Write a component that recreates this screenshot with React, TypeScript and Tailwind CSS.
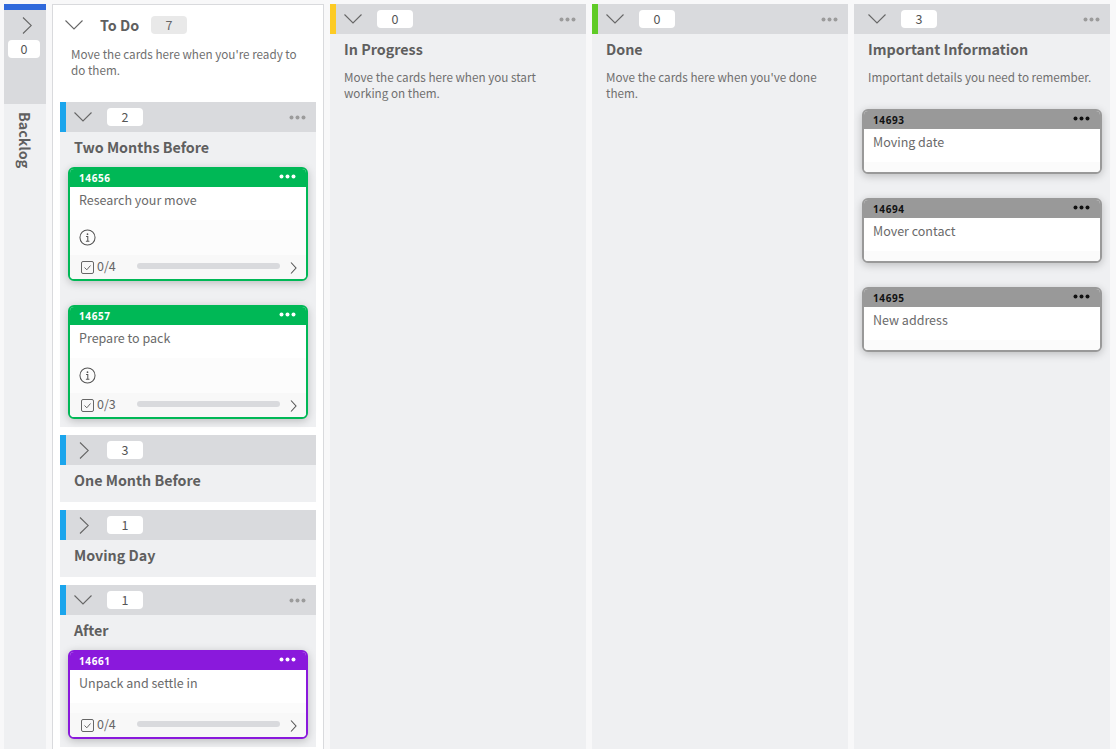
import { FC, ReactNode } from 'react'

const font = { fontFamily: '"Noto Sans CJK JP", "Noto Sans", sans-serif' }

const Chevron: FC<{ open?: boolean; className?: string }> = ({ open, className = '' }) =>
  open ? (
    <svg width="18" height="10" viewBox="0 0 18 10" className={className} fill="none" stroke="#666" strokeWidth="1.1">
      <path d="M0.5 0.5 L9 9 L17.5 0.5" />
    </svg>
  ) : (
    <svg width="10" height="17" viewBox="0 0 10 17" className={className} fill="none" stroke="#666" strokeWidth="1.1">
      <path d="M1 0.5 L9.3 8.5 L1 16.5" />
    </svg>
  )

const Dots: FC<{ color: string }> = ({ color }) => (
  <svg width="17" height="5" viewBox="0 0 17 5" fill={color}>
    <circle cx="2.5" cy="2.5" r="2" />
    <circle cx="8.5" cy="2.5" r="2" />
    <circle cx="14.5" cy="2.5" r="2" />
  </svg>
)

const Count: FC<{ n: number }> = ({ n }) => (
  <div className="w-9 h-[18px] rounded bg-white flex items-center justify-center text-[12.5px] leading-[18px] text-[#555]">{n}</div>
)

const LaneBar: FC<{ stripe: string; n: number; open?: boolean }> = ({ stripe, n, open }) => (
  <div className="h-[30px] bg-[#d9dadd] flex items-center">
    <div className={`w-1.5 h-full ${stripe}`} />
    <div className={`w-[41px] shrink-0 flex ${open ? 'pl-2' : 'pl-[13px]'}`}>
      <Chevron open={open} />
    </div>
    <Count n={n} />
    {open && (
      <div className="ml-auto mr-[10px] flex">
        <Dots color="#9b9b9b" />
      </div>
    )}
  </div>
)

const Progress: FC<{ label: string }> = ({ label }) => (
  <div className="h-6 bg-[#f8f8f8] flex items-center pl-[11px] rounded-b-[3px]">
    <svg width="13" height="13" viewBox="0 0 13 13" fill="none" stroke="#666" strokeWidth="1" className="shrink-0">
      <rect x="0.5" y="0.5" width="12" height="12" rx="1.5" />
      <path d="M3.5 6.5 L5.8 8.8 L9.5 4.5" />
    </svg>
    <span className="ml-[3px] w-[40px] -mt-[2px] text-[12.5px] leading-4 text-[#666]">{label}</span>
    <div className="w-[143px] h-1.5 -mt-[2px] rounded-full bg-[#d9dadd]" />
    <svg width="7" height="12" viewBox="0 0 7 12" fill="none" stroke="#555" strokeWidth="1.1" className="ml-[10px] mt-[2px]">
      <path d="M1 0.5 L6 6 L1 11.5" />
    </svg>
  </div>
)

const Card: FC<{
  id: number
  title: string
  border: string
  head: string
  idTone?: string
  dots?: string
  info?: boolean
  progress?: string
}> = ({ id, title, border, head, idTone = 'text-white', dots = '#ffffff', info, progress }) => (
  <div className={`rounded-[6px] border-2 bg-white shadow-[0_2px_8px_rgba(0,0,0,0.22)] overflow-hidden ${border}`}>
    <div className={`h-[18px] flex items-center justify-between pl-[9px] pr-[10px] ${head}`}>
      <span className={`text-[10px] font-bold tracking-[0.6px] leading-[18px] ${idTone}`} style={{ fontFamily: '"Noto Sans", sans-serif' }}>
        {id}
      </span>
      <div className="-mt-[3px] flex">
        <Dots color={dots} />
      </div>
    </div>
    <div className="h-[33px] pl-[9px] pt-1 text-[12.5px] leading-[18px] text-[#6a6a6a]">{title}</div>
    {info ? (
      <div className="h-[35px] bg-[#fcfcfc] pl-[9px] pt-[9px]">
        <svg width="17" height="17" viewBox="0 0 18 18" fill="none" stroke="#555" strokeWidth="1.1">
          <circle cx="9" cy="9" r="8" />
          <circle cx="9" cy="5.5" r="0.9" fill="#555" stroke="none" />
          <path d="M7.5 8 H9.3 V13 M7.3 13 H11" />
        </svg>
      </div>
    ) : (
      <div className="h-[10px] bg-[#fbfbfb]" />
    )}
    {progress && <Progress label={progress} />}
  </div>
)

const Title: FC<{ children: ReactNode }> = ({ children }) => (
  <div className="text-[14.3px] font-bold leading-5 text-[#5f5f5f]">{children}</div>
)

const Desc: FC<{ children: ReactNode; className?: string }> = ({ children, className = '' }) => (
  <p className={`text-[11.7px] leading-4 text-[#6f6f6f] ${className}`}>{children}</p>
)

const Column: FC<{ stripe: string; n: number; title: string; children?: ReactNode }> = ({ stripe, n, title, children }) => (
  <div className="w-64 shrink-0 bg-[#eff0f2] h-[745px]">
    <LaneBar stripe={stripe} n={n} open />
    <div className="pl-[14px] pt-[5px] pr-2">
      <Title>{title}</Title>
    </div>
    {children}
  </div>
)

const Lane: FC<{ stripe: string; n: number; title: string; open?: boolean; className?: string; children?: ReactNode }> = ({
  n,
  stripe,
  title,
  open,
  className = '',
  children,
}) => (
  <div className={`bg-[#eff0f2] ${className}`}>
    <LaneBar stripe={stripe} n={n} open={open} />
    <div className={`pl-[14px] pt-[5px] ${open ? 'pb-[10px]' : 'pb-3'}`}>
      <Title>{title}</Title>
    </div>
    {open && <div className="px-2 flex flex-col gap-6">{children}</div>}
  </div>
)

const App: FC = () => {
  const green = { border: 'border-[#00b856]', head: 'bg-[#00b856]' }
  const purple = { border: 'border-[#8a19dc]', head: 'bg-[#8a19dc]' }
  const gray = { border: 'border-[#999999]', head: 'bg-[#999999]', idTone: 'text-[#111]', dots: '#111111' }

  return (
    <div className="w-[1116px] h-[749px] overflow-hidden bg-[#f8f8f9] pt-1 pl-1 flex gap-1.5" style={font}>
      <div className="w-[42px] shrink-0 h-[745px] bg-[#eff0f2]">
        <div className="h-[100px] bg-[#d9dadd] border-t-[6px] border-[#2f69db] flex flex-col items-center">
          <Chevron className="mt-[7px] ml-[4px]" />
          <div className="mt-[6px] mr-[2px] w-8 h-[18px] rounded bg-white flex items-center justify-center text-[12.5px] leading-[18px] text-[#555]">0</div>
        </div>
        <div className="flex justify-center pt-2">
          <span className="text-[14.3px] font-bold leading-5 text-[#5f5f5f] [writing-mode:vertical-rl]">Backlog</span>
        </div>
      </div>

      <div className="w-[272px] shrink-0 h-[760px] bg-white border border-[#d9dadd] px-[7px]">
        <div className="flex items-center h-[38px] pt-[2px]">
          <Chevron open className="ml-[5px]" />
          <span className="ml-[17px] w-[38px] whitespace-nowrap text-[14.3px] font-bold leading-5 text-[#5f5f5f]">To Do</span>
          <div className="ml-[13px] w-9 h-[18px] rounded bg-[#e9e9e9] flex items-center justify-center text-[12.5px] leading-[18px] text-[#666]">7</div>
        </div>
        <Desc className="ml-[11px] mt-[3px] w-[240px]">Move the cards here when you're ready to do them.</Desc>
        <div className="mt-6 flex flex-col gap-2">
          <Lane stripe="bg-[#1ba5ec]" n={2} title="Two Months Before" open className="pb-2">
            <Card id={14656} title="Research your move" {...green} info progress="0/4" />
            <Card id={14657} title="Prepare to pack" {...green} info progress="0/3" />
          </Lane>
          <Lane stripe="bg-[#1ba5ec]" n={3} title="One Month Before" />
          <Lane stripe="bg-[#1ba5ec]" n={1} title="Moving Day" />
          <Lane stripe="bg-[#1ba5ec]" n={1} title="After" open className="pb-2">
            <Card id={14661} title="Unpack and settle in" {...purple} progress="0/4" />
          </Lane>
        </div>
      </div>

      <Column stripe="bg-[#fdcb24]" n={0} title="In Progress">
        <Desc className="pl-[14px] pt-[10px] w-[230px]">Move the cards here when you start working on them.</Desc>
      </Column>
      <Column stripe="bg-[#5fcb26]" n={0} title="Done">
        <Desc className="pl-[14px] pt-[10px] w-[230px]">Move the cards here when you've done them.</Desc>
      </Column>
      <Column stripe="bg-[#d9dadd]" n={3} title="Important Information">
        <Desc className="pl-[14px] pt-[10px]">Important details you need to remember.</Desc>
        <div className="px-2 mt-6 flex flex-col gap-6">
          <Card id={14693} title="Moving date" {...gray} />
          <Card id={14694} title="Mover contact" {...gray} />
          <Card id={14695} title="New address" {...gray} />
        </div>
      </Column>
    </div>
  )
}

export default App
